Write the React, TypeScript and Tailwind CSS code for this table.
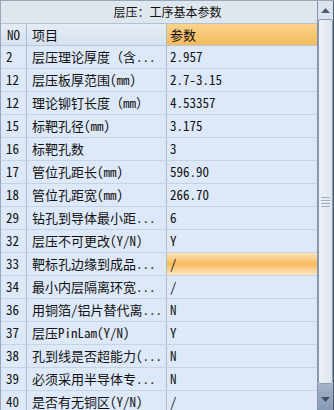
import React from "react";

type Row = { no: string; item: string; value: string };

const rows: Row[] = [
  { no: "2", item: "层压理论厚度（含...", value: "2.957" },
  { no: "12", item: "层压板厚范围(mm)", value: "2.7-3.15" },
  { no: "12", item: "理论铆钉长度（mm）", value: "4.53357" },
  { no: "15", item: "标靶孔径(mm)", value: "3.175" },
  { no: "16", item: "标靶孔数", value: "3" },
  { no: "17", item: "管位孔距长(mm)", value: "596.90" },
  { no: "18", item: "管位孔距宽(mm)", value: "266.70" },
  { no: "29", item: "钻孔到导体最小距...", value: "6" },
  { no: "32", item: "层压不可更改(Y/N)", value: "Y" },
  { no: "33", item: "靶标孔边缘到成品...", value: "/" },
  { no: "34", item: "最小内层隔离环宽...", value: "/" },
  { no: "36", item: "用铜箔/铝片替代离...", value: "N" },
  { no: "37", item: "层压PinLam(Y/N)", value: "Y" },
  { no: "38", item: "孔到线是否超能力(...", value: "N" },
  { no: "39", item: "必须采用半导体专...", value: "N" },
  { no: "40", item: "是否有无铜区(Y/N)", value: "/" },
];

const SELECTED = 9;

const font = {
  fontFamily:
    '"Noto Sans Mono CJK SC", "Noto Sans CJK SC", "Liberation Mono", monospace',
};

function ScrollBar() {
  return (
    <div className="w-[17px] shrink-0 flex flex-col bg-[#e6ecf3] border-l border-[#8593a8] border-r border-r-[#4b5a70]">
      <div className="h-[18px] shrink-0 flex items-center justify-center bg-[#dbe3ee]">
        <svg width="9" height="5" viewBox="0 0 9 5">
          <path d="M0 5 L4.5 0 L9 5 Z" fill="#4d5d78" />
        </svg>
      </div>
      <div className="flex-1 rounded-[2px] border border-[#8a9ab2] bg-gradient-to-r from-[#eef2f7] to-[#dde5ef] flex items-center justify-center">
        <div className="flex flex-col gap-[2px]">
          <div className="w-[9px] h-px bg-[#a3b0c2]" />
          <div className="w-[9px] h-px bg-[#a3b0c2]" />
          <div className="w-[9px] h-px bg-[#a3b0c2]" />
          <div className="w-[9px] h-px bg-[#a3b0c2]" />
        </div>
      </div>
      <div className="h-[26px] shrink-0 flex items-end justify-center pb-[8px] bg-gradient-to-b from-[#a3b3ca] to-[#8799b4]">
        <svg width="9" height="5" viewBox="0 0 9 5">
          <path d="M0 0 L9 0 L4.5 5 Z" fill="#3f4e66" />
        </svg>
      </div>
    </div>
  );
}

export default function App() {
  return (
    <div
      className="w-[334px] h-[410px] overflow-hidden flex bg-[#dde9f8] text-[#111] border-t border-l border-[#9aa7b8]"
      style={font}
    >
      <div className="flex-1 flex flex-col min-w-0">
        <div className="h-[23px] shrink-0 flex items-center justify-center pl-[17px] text-[12px] bg-[#dfe6ee] border-b border-[#b5c1d0]">
          层压：工序基本参数
        </div>
        <div className="flex-1 flex flex-col min-h-0 text-[13px]">
          <div className="h-[22px] shrink-0 grid grid-cols-[26px_140px_1fr] border-b border-[#b8c6d8]">
            <div className="flex items-center pl-[6px] bg-gradient-to-b from-[#e4ecf6] to-[#d7e2f0] border-r border-[#aebcd0]">
              NO
            </div>
            <div className="flex items-center pl-[5px] bg-gradient-to-b from-[#e4ecf6] to-[#d7e2f0] border-r border-[#aebcd0]">
              项目
            </div>
            <div className="flex items-center pl-[3px] bg-gradient-to-b from-[#fad38a] to-[#f5bb5c]">
              参数
            </div>
          </div>
          {rows.map((r, i) => (
            <div
              key={i}
              className="h-[23px] shrink-0 grid grid-cols-[26px_140px_1fr] border-b border-[#c6d3e3]"
            >
              <div className="flex items-center pl-[5px] border-r border-[#aebcd0]">
                {r.no}
              </div>
              <div className="flex items-center pl-[5px] border-r border-[#aebcd0] whitespace-nowrap overflow-hidden">
                {r.item}
              </div>
              <div
                className={
                  i === SELECTED
                    ? "flex items-center pl-[3px] bg-gradient-to-b from-[#fde4b8] via-[#f8b95c] to-[#fde6bf]"
                    : "flex items-center pl-[3px]"
                }
              >
                {r.value}
              </div>
            </div>
          ))}
        </div>
      </div>
      <ScrollBar />
    </div>
  );
}
